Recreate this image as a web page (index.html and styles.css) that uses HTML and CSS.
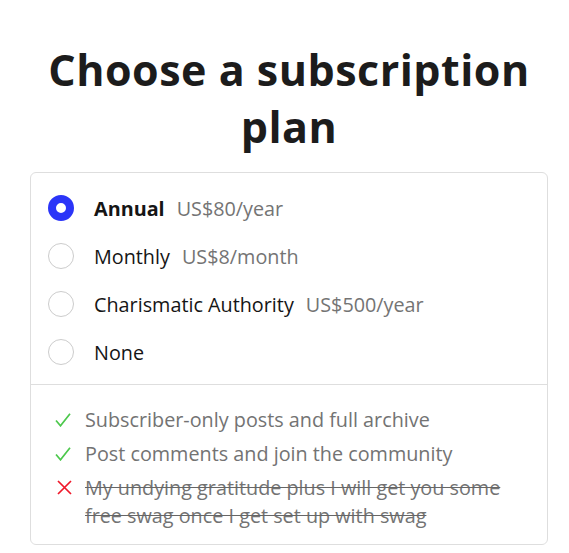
FILE: index.html
```html
<!DOCTYPE html>
<html lang="en">
<head>
<meta charset="utf-8">
<title>Choose a subscription plan</title>
<link rel="stylesheet" href="styles.css">
</head>
<body>
<main class="page">
  <h1 class="title">Choose a subscription plan</h1>
  <section class="card">
    <ul class="plans">
      <li class="plan">
        <span class="radio radio-on"></span>
        <span class="plan-name plan-name-on">Annual</span>
        <span class="price">US$80/year</span>
      </li>
      <li class="plan">
        <span class="radio"></span>
        <span class="plan-name">Monthly</span>
        <span class="price">US$8/month</span>
      </li>
      <li class="plan">
        <span class="radio"></span>
        <span class="plan-name">Charismatic Authority</span>
        <span class="price">US$500/year</span>
      </li>
      <li class="plan">
        <span class="radio"></span>
        <span class="plan-name">None</span>
      </li>
    </ul>
    <ul class="features">
      <li class="feature">
        <svg class="icon" viewBox="0 0 16 14"><path d="M1 7.5 L5.5 12.8 L15 0.8" fill="none" stroke="#4cc84c" stroke-width="1.7"/></svg>
        <span class="feature-text">Subscriber-only posts and full archive</span>
      </li>
      <li class="feature">
        <svg class="icon" viewBox="0 0 16 14"><path d="M1 7.5 L5.5 12.8 L15 0.8" fill="none" stroke="#4cc84c" stroke-width="1.7"/></svg>
        <span class="feature-text">Post comments and join the community</span>
      </li>
      <li class="feature">
        <svg class="icon icon-x" viewBox="0 0 15 15"><path d="M1 1 L14 14 M14 1 L1 14" fill="none" stroke="#f0182a" stroke-width="1.7"/></svg>
        <span class="feature-text struck">My undying gratitude plus I will get you some free swag once I get set up with swag</span>
      </li>
    </ul>
  </section>
</main>
</body>
</html>
```

FILE: styles.css
```css
* { box-sizing: border-box; }

html, body {
  margin: 0;
  padding: 0;
  background: #ffffff;
}

body {
  font-family: "Open Sans", "Noto Sans", sans-serif;
  color: #1b1b1b;
}

.page {
  padding: 41px 21px 0 30px;
}

.title {
  margin: 0 0 17px;
  text-align: center;
  font-size: 43px;
  line-height: 57px;
  font-weight: 700;
  color: #1c1c1c;
  letter-spacing: 0.5px;
}

.card {
  border: 1px solid #dedede;
  border-radius: 6px;
}

.plans {
  list-style: none;
  margin: 0;
  padding: 11px 18px 8px 17px;
  border-bottom: 1px solid #dedede;
}

.plan {
  display: flex;
  align-items: center;
  height: 48px;
}

.radio {
  flex: none;
  width: 26px;
  height: 26px;
  border-radius: 50%;
  border: 1.5px solid #cccccc;
  background: #fff;
  margin-right: 20px;
}

.radio-on {
  border: 8px solid #2b35f8;
}

.plan-name {
  font-size: 19.8px;
  color: #151515;
  margin-right: 12px;
}

.plan-name-on {
  font-weight: 700;
}

.price {
  font-size: 19.8px;
  color: #747474;
}

.features {
  list-style: none;
  margin: 0;
  padding: 21px 24px 14px 24px;
  display: flex;
  flex-direction: column;
  gap: 6px;
}

.feature {
  display: flex;
  align-items: flex-start;
}

.icon {
  flex: none;
  width: 16px;
  height: 14px;
  margin: 7px 14px 0 0;
}

.icon-x {
  width: 15px;
  height: 15px;
  margin: 6px 13px 0 2px;
}

.feature-text {
  font-size: 19.8px;
  line-height: 28px;
  color: #737373;
}

.struck {
  text-decoration: line-through;
  text-decoration-color: #666;
}
```
